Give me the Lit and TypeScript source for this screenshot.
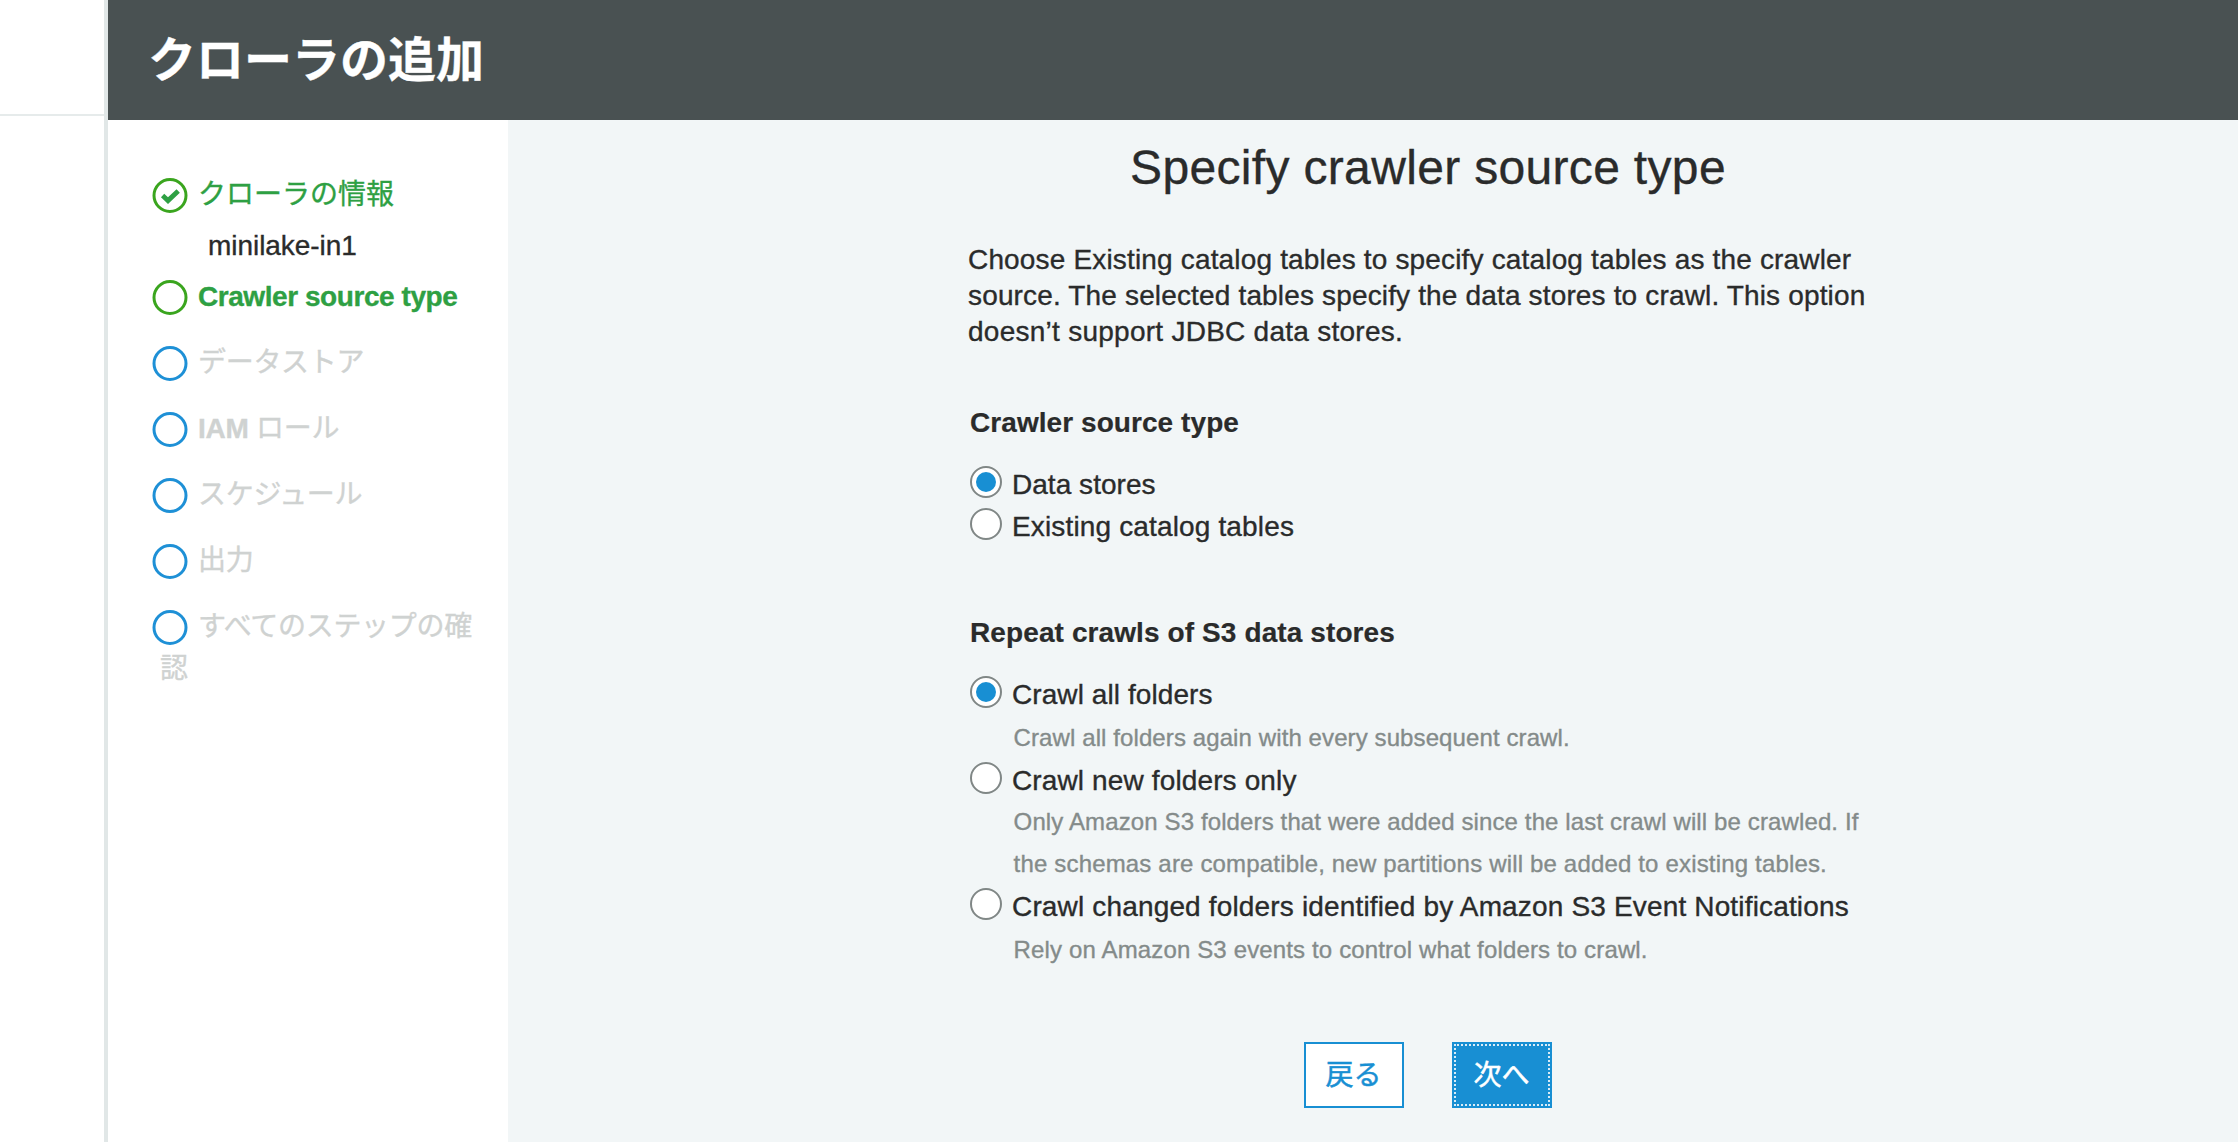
import { LitElement, html, css, nothing } from "lit";
import { customElement, property, state } from "lit/decorators.js";
import { classMap } from "lit/directives/class-map.js";

type StepState = "done" | "current" | "pending";

interface Step {
  label: string;
  latin?: string;
  state: StepState;
  detail?: string;
}

interface Option {
  label: string;
  spacing: string;
  help?: { text: string; spacing: string }[];
}

const STEPS: Step[] = [
  { label: "クローラの情報", state: "done", detail: "minilake-in1" },
  { label: "", latin: "Crawler source type", state: "current" },
  { label: "データストア", state: "pending" },
  { label: " ロール", latin: "IAM", state: "pending" },
  { label: "スケジュール", state: "pending" },
  { label: "出力", state: "pending" },
  { label: "すべてのステップの確認", state: "pending" },
];

const SOURCES: Option[] = [
  { label: "Data stores", spacing: "0.04px" },
  { label: "Existing catalog tables", spacing: "0.15px" },
];

const REPEATS: Option[] = [
  {
    label: "Crawl all folders",
    spacing: "0.08px",
    help: [{ text: "Crawl all folders again with every subsequent crawl.", spacing: "0.1px" }],
  },
  {
    label: "Crawl new folders only",
    spacing: "0.13px",
    help: [
      { text: "Only Amazon S3 folders that were added since the last crawl will be crawled. If", spacing: "0.125px" },
      { text: "the schemas are compatible, new partitions will be added to existing tables.", spacing: "0.17px" },
    ],
  },
  {
    label: "Crawl changed folders identified by Amazon S3 Event Notifications",
    spacing: "0.16px",
    help: [{ text: "Rely on Amazon S3 events to control what folders to crawl.", spacing: "0.145px" }],
  },
];

@customElement("wizard-steps")
export class WizardSteps extends LitElement {
  static styles = css`
    :host { display: block; }
    ol { list-style: none; margin: 0; padding: 54px 24px 0 44px; }
    .step { padding-left: 8px; line-height: 42px; font-size: 28px; margin-bottom: 24px; text-indent: -8px; }
    .step.done { margin-bottom: 9px; }
    .icon { width: 36px; height: 36px; margin-right: 10px; vertical-align: -9.5px; text-indent: 0; }
    .done, .current { color: #2ea043; }
    .done circle, .current circle { stroke: #3aa51e; }
    .pending { color: #cfd2d1; letter-spacing: -0.3px; }
    .pending circle { stroke: #1e90d6; }
    .latin { font-weight: bold; letter-spacing: -0.25px; }
    .current .latin { letter-spacing: -0.44px; }
    .detail { color: #2a2b2b; padding-left: 48px; margin-top: 9px; letter-spacing: -0.05px; text-indent: 0; }
  `;

  render() {
    return html`<ol>
      ${STEPS.map(
        (s) => html`<li class=${classMap({ step: true, [s.state]: true })}><svg class="icon" viewBox="0 0 36 36" fill="none"
            ><circle cx="18" cy="17.5" r="16" stroke-width="3"></circle
            >${s.state === "done"
              ? html`<svg viewBox="0 0 36 36" width="36" height="36"><path d="M10.6 17.6 L16 22.6 L26.2 13" fill="none" stroke="#2ea043" stroke-width="4.8"></path></svg>`
              : nothing}</svg
          >${s.latin ? html`<span class="latin">${s.latin}</span>` : nothing}${s.label}${s.detail
            ? html`<div class="detail">${s.detail}</div>`
            : nothing}</li>`,
      )}
    </ol>`;
  }
}

@customElement("radio-list")
export class RadioList extends LitElement {
  @property({ attribute: false }) options: Option[] = [];
  @state() private selected = 0;

  static styles = css`
    :host { display: block; }
    .row { display: flex; height: 42px; line-height: 44px; font-size: 28px; color: #2a2b2b; cursor: pointer; }
    .radio {
      box-sizing: border-box; flex: none; width: 32px; height: 32px; margin: 3px 10px 0 0;
      border: 2px solid #808786; border-radius: 50%; background: #fff;
      display: flex; align-items: center; justify-content: center;
    }
    .dot { width: 20px; height: 20px; border-radius: 50%; background: #188fd3; }
    .help { padding-left: 43.6px; font-size: 24px; line-height: 42px; color: #848b8a; white-space: nowrap; }
    .help.single { padding-top: 2px; }
  `;

  render() {
    return this.options.map(
      (o, i) => html`
        <div class="row" role="radio" aria-checked=${i === this.selected} @click=${() => (this.selected = i)}>
          <span class="radio">${i === this.selected ? html`<span class="dot"></span>` : nothing}</span>
          <span style="letter-spacing:${o.spacing}">${o.label}</span>
        </div>
        ${o.help
          ? html`<div class=${classMap({ help: true, single: o.help.length === 1 })}>
              ${o.help.map((h) => html`<div style="letter-spacing:${h.spacing}">${h.text}</div>`)}
            </div>`
          : nothing}
      `,
    );
  }
}

@customElement("app-root")
export class AppRoot extends LitElement {
  static styles = css`
    :host {
      display: flex; height: 1142px; overflow: hidden; background: #fff; color: #2a2b2b;
      font-family: "Liberation Sans", "Noto Sans CJK JP", sans-serif;
      -webkit-text-stroke: 0.35px currentColor;
    }
    .rail { box-sizing: border-box; flex: none; width: 108px; border-right: 4px solid #e1e7e7; }
    .rail-head { height: 114px; border-bottom: 2px solid #e6ebeb; }
    .page { flex: 1; display: flex; flex-direction: column; min-width: 0; }
    .bar { flex: none; height: 120px; background: #495152; padding-left: 40px; }
    .bar h1 { margin: 0; color: #fff; font-size: 48px; line-height: 122px; font-weight: bold; }
    .body { flex: 1; display: flex; min-height: 0; }
    wizard-steps { flex: none; width: 400px; }
    main { flex: 1; background: #f2f6f7; padding: 18px 0 0 460px; }
    .content { width: 920px; }
    h2 { margin: 0 0 44px; font-size: 48px; line-height: 60px; font-weight: normal; text-align: center; letter-spacing: 0.33px; }
    .intro { font-size: 28px; line-height: 36px; white-space: nowrap; }
    .l1 { letter-spacing: 0.165px; }
    .l2 { letter-spacing: 0.155px; }
    .l3 { letter-spacing: 0.26px; }
    section { padding-left: 2px; margin-top: 52px; }
    section + section { margin-top: 65px; }
    h3 { margin: 0 0 19px; font-size: 28px; line-height: 42px; letter-spacing: 0.067px; -webkit-text-stroke-width: 0.2px; }
    section + section h3 { letter-spacing: 0.105px; }
    .actions { display: flex; justify-content: center; gap: 48px; margin-top: 71px; }
    button {
      box-sizing: border-box; width: 100px; height: 66px; padding: 2px 1px 0 0; border: 2px solid #188fd3; border-radius: 0;
      background: #fff; color: #188fd3; font: 28px/60px "Liberation Sans", "Noto Sans CJK JP", sans-serif;
      -webkit-text-stroke: 0.5px currentColor;
    }
    .primary { background: #188fd3; color: #fff; outline: 2px dotted #d9ecf7; outline-offset: -4px; }
  `;

  render() {
    return html`
      <div class="rail"><div class="rail-head"></div></div>
      <div class="page">
        <header class="bar"><h1>クローラの追加</h1></header>
        <div class="body">
          <wizard-steps></wizard-steps>
          <main>
            <div class="content">
              <h2>Specify crawler source type</h2>
              <div class="intro">
                <div class="l1">Choose Existing catalog tables to specify catalog tables as the crawler</div>
                <div class="l2">source. The selected tables specify the data stores to crawl. This option</div>
                <div class="l3">doesn’t support JDBC data stores.</div>
              </div>
              <section>
                <h3>Crawler source type</h3>
                <radio-list .options=${SOURCES}></radio-list>
              </section>
              <section>
                <h3>Repeat crawls of S3 data stores</h3>
                <radio-list .options=${REPEATS}></radio-list>
              </section>
              <div class="actions">
                <button>戻る</button>
                <button class="primary">次へ</button>
              </div>
            </div>
          </main>
        </div>
      </div>
    `;
  }
}
